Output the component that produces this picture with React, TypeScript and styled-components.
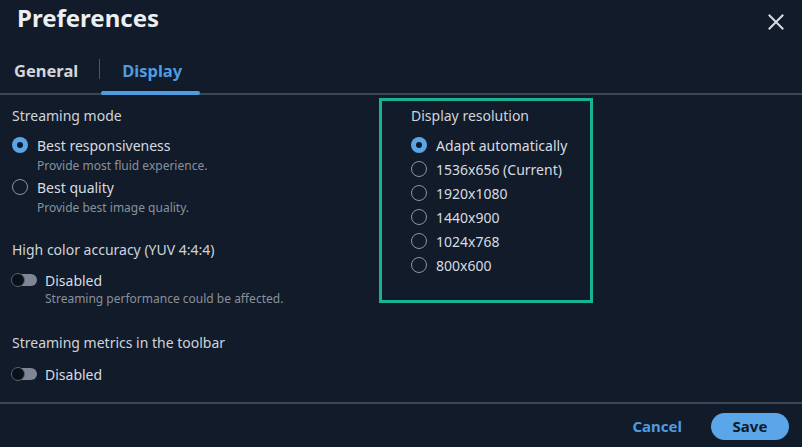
import React, { FC } from 'react'
import styled, { createGlobalStyle } from 'styled-components'

const GlobalStyle = createGlobalStyle`
	html, body {
		margin: 0;
		padding: 0;
		background: #111b2a;
	}
	body {
		font-family: 'Noto Sans', 'Open Sans', sans-serif;
	}
`

const Dialog = styled.div`
	width: 802px;
	height: 447px;
	background: #111b2a;
	display: flex;
	flex-direction: column;
	overflow: hidden;
`

const Header = styled.div`
	display: flex;
	justify-content: space-between;
	align-items: flex-start;
	padding: 3px 18px 0 17px;
	height: 40px;
`

const Title = styled.h1`
	margin: 0;
	font-size: 24px;
	font-weight: 700;
	line-height: 30px;
	color: #eceef1;
`

const CloseButton = styled.button`
	margin-top: 11px;
	width: 16px;
	height: 16px;
	padding: 0;
	border: 0;
	background: transparent;
	cursor: pointer;
	display: flex;
`

const Tabs = styled.div`
	display: flex;
	align-items: center;
	height: 50px;
	border-bottom: 2px solid #3b4757;
	padding-left: 14px;
`

const Tab = styled.div<{ $active?: boolean }>`
	position: relative;
	height: 100%;
	box-sizing: border-box;
	display: flex;
	align-items: center;
	padding: 4px ${(p) => (p.$active ? '18px' : '21px')} 0 ${(p) => (p.$active ? '22px' : '0')};
	font-size: 16.5px;
	font-weight: 700;
	color: ${(p) => (p.$active ? '#4d9de0' : '#d3d6db')};
	&::after {
		content: '';
		display: ${(p) => (p.$active ? 'block' : 'none')};
		position: absolute;
		left: 1px;
		right: 0;
		bottom: -2px;
		height: 4px;
		border-radius: 2px;
		background: #4d9de0;
	}
`

const TabDivider = styled.span`
	width: 1px;
	height: 20px;
	margin-top: 2px;
	background: #4a5565;
`

const Body = styled.div`
	flex: 1;
	display: grid;
	grid-template-columns: 367px 1fr;
	padding-left: 12px;
	border-bottom: 2px solid #3b4757;
`

const Column = styled.div<{ $top: number }>`
	display: flex;
	flex-direction: column;
	padding-top: ${(p) => p.$top}px;
`

const SectionLabel = styled.div<{ $gap?: number; $after?: number }>`
	font-size: 14px;
	line-height: 20px;
	color: #d0d4da;
	margin-top: ${(p) => p.$gap ?? 0}px;
	margin-bottom: ${(p) => p.$after ?? 9}px;
`

const OptionRow = styled.label<{ $gap?: number }>`
	display: flex;
	align-items: center;
	gap: 9px;
	height: 20px;
	margin-top: ${(p) => p.$gap ?? 0}px;
	font-size: 14px;
	color: #d8dbe0;
`

const Hint = styled.div<{ $indent: number; $gap?: number }>`
	font-size: 12px;
	line-height: 16px;
	color: #8a919b;
	padding-left: ${(p) => p.$indent}px;
	margin-top: ${(p) => p.$gap ?? 3}px;
`

const Radio = styled.span<{ $checked?: boolean }>`
	box-sizing: border-box;
	width: 16px;
	height: 16px;
	border-radius: 50%;
	flex-shrink: 0;
	display: flex;
	align-items: center;
	justify-content: center;
	border: ${(p) => (p.$checked ? 'none' : '1.5px solid #8c949f')};
	background: ${(p) => (p.$checked ? '#5aa5e6' : 'transparent')};
	&::after {
		content: '';
		display: ${(p) => (p.$checked ? 'block' : 'none')};
		width: 6px;
		height: 6px;
		border-radius: 50%;
		background: #0f1826;
	}
`

const Toggle = styled.span`
	box-sizing: border-box;
	position: relative;
	width: 25px;
	height: 12px;
	border-radius: 6px;
	background: #7e8793;
	flex-shrink: 0;
	&::after {
		content: '';
		position: absolute;
		left: -1px;
		top: -1px;
		box-sizing: border-box;
		width: 14px;
		height: 14px;
		border-radius: 50%;
		background: #0a0f18;
		border: 1px solid #59626e;
	}
`

const ToggleRow = styled(OptionRow)`
	gap: 8px;
`

const HighlightBox = styled.div`
	width: 214px;
	box-sizing: border-box;
	border: 3px solid #17b394;
	padding: 5px 0 25px 29px;
	display: flex;
	flex-direction: column;
`

const Footer = styled.div`
	height: 43px;
	display: flex;
	align-items: center;
	justify-content: flex-end;
	gap: 29px;
	padding-right: 13px;
`

const TextButton = styled.button`
	border: 0;
	background: transparent;
	padding: 0;
	font-family: inherit;
	font-size: 15px;
	font-weight: 700;
	color: #4d9de0;
	cursor: pointer;
`

const PrimaryButton = styled.button`
	width: 78px;
	height: 27px;
	border: 0;
	border-radius: 14px;
	background: #5aa6e8;
	font-family: inherit;
	font-size: 15px;
	font-weight: 700;
	color: #0f1a29;
	cursor: pointer;
	margin-top: 1px;
`

const resolutions = ['Adapt automatically', '1536x656 (Current)', '1920x1080', '1440x900', '1024x768', '800x600']

const CloseIcon: FC = () => (
	<svg width='16' height='16' viewBox='0 0 16 16'>
		<path d='M1.5 1.5 L14.5 14.5 M14.5 1.5 L1.5 14.5' stroke='#d8dbe0' strokeWidth='2' strokeLinecap='square' />
	</svg>
)

const App: FC = () => (
	<>
		<GlobalStyle />
		<Dialog>
			<Header>
				<Title>Preferences</Title>
				<CloseButton aria-label='Close'>
					<CloseIcon />
				</CloseButton>
			</Header>
			<Tabs>
				<Tab>General</Tab>
				<TabDivider />
				<Tab $active>Display</Tab>
			</Tabs>
			<Body>
				<Column $top={11}>
					<SectionLabel>Streaming mode</SectionLabel>
					<OptionRow>
						<Radio $checked />
						Best responsiveness
					</OptionRow>
					<Hint $indent={25}>Provide most fluid experience.</Hint>
					<OptionRow $gap={3}>
						<Radio />
						Best quality
					</OptionRow>
					<Hint $indent={25} $gap={3}>Provide best image quality.</Hint>

					<SectionLabel $gap={24} $after={10}>High color accuracy (YUV 4:4:4)</SectionLabel>
					<ToggleRow>
						<Toggle />
						Disabled
					</ToggleRow>
					<Hint $indent={33} $gap={1}>Streaming performance could be affected.</Hint>

					<SectionLabel $gap={26} $after={11}>Streaming metrics in the toolbar</SectionLabel>
					<ToggleRow>
						<Toggle />
						Disabled
					</ToggleRow>
				</Column>
				<Column $top={3}>
					<HighlightBox>
						<SectionLabel>Display resolution</SectionLabel>
						{resolutions.map((r, i) => (
							<OptionRow key={r} $gap={i === 0 ? 0 : 4}>
								<Radio $checked={i === 0} />
								{r}
							</OptionRow>
						))}
					</HighlightBox>
				</Column>
			</Body>
			<Footer>
				<TextButton>Cancel</TextButton>
				<PrimaryButton>Save</PrimaryButton>
			</Footer>
		</Dialog>
	</>
)

export default App
